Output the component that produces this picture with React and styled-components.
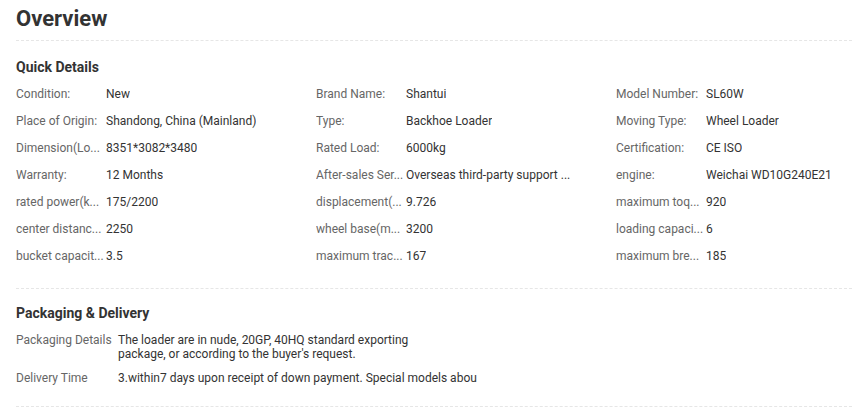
import React from "react";
import styled, { createGlobalStyle } from "styled-components";

const Global = createGlobalStyle`
  html, body { margin: 0; padding: 0; background: #fff; }
  body { font-family: Roboto, "Liberation Sans", Arial, sans-serif; color: #333; }
`;

const Page = styled.div`
  padding-left: 16px;
  width: 836px;
`;

const TitleBar = styled.div`
  height: 40px;
  border-bottom: 1px dashed #e6e6e6;
`;

const Title = styled.h1`
  margin: 0;
  font-size: 22px;
  line-height: 38px;
  font-weight: 700;
  color: #333;
`;

const Section = styled.section`
  padding-top: ${(p) => p.$top}px;
  padding-bottom: ${(p) => p.$bottom}px;
  border-bottom: 1px dashed #e6e6e6;
`;

const Heading = styled.h2`
  margin: 0;
  font-size: 14px;
  line-height: 20px;
  font-weight: 700;
  color: #333;
`;

const Grid = styled.div`
  margin-top: 4px;
  display: grid;
  grid-template-columns: 300px 300px 1fr;
`;

const Item = styled.div`
  display: flex;
  height: 27px;
  line-height: 27px;
  font-size: 12px;
  white-space: nowrap;
`;

const Label = styled.span`
  flex: 0 0 90px;
  width: 90px;
  overflow: hidden;
  color: #666;
`;

const Value = styled.span`
  max-width: 180px;
  overflow: hidden;
  color: #333;
`;

const DetailList = styled.div`
  margin-top: 10px;
  display: flex;
  flex-direction: column;
  gap: 10px;
`;

const DetailRow = styled.div`
  display: flex;
  font-size: 12px;
  line-height: 14px;
`;

const DetailLabel = styled.span`
  flex: 0 0 102px;
  color: #666;
`;

const DetailValue = styled.span`
  color: #333;
  width: 380px;
`;

const quick = [
  ["Condition:", "New"],
  ["Brand Name:", "Shantui"],
  ["Model Number:", "SL60W"],
  ["Place of Origin:", "Shandong, China (Mainland)"],
  ["Type:", "Backhoe Loader"],
  ["Moving Type:", "Wheel Loader"],
  ["Dimension(Lo...", "8351*3082*3480"],
  ["Rated Load:", "6000kg"],
  ["Certification:", "CE ISO"],
  ["Warranty:", "12 Months"],
  ["After-sales Ser...", "Overseas third-party support ..."],
  ["engine:", "Weichai WD10G240E21"],
  ["rated power(k...", "175/2200"],
  ["displacement(...", "9.726"],
  ["maximum toq...", "920"],
  ["center distanc...", "2250"],
  ["wheel base(m...", "3200"],
  ["loading capaci...", "6"],
  ["bucket capacit...", "3.5"],
  ["maximum trac...", "167"],
  ["maximum bre...", "185"],
];

export default function App() {
  return (
    <Page>
      <Global />
      <TitleBar>
        <Title>Overview</Title>
      </TitleBar>
      <Section $top={16} $bottom={18}>
        <Heading>Quick Details</Heading>
        <Grid>
          {quick.map(([l, v]) => (
            <Item key={l}>
              <Label>{l}</Label>
              <Value>{v}</Value>
            </Item>
          ))}
        </Grid>
      </Section>
      <Section $top={14} $bottom={21}>
        <Heading>Packaging &amp; Delivery</Heading>
        <DetailList>
          <DetailRow>
            <DetailLabel>Packaging Details</DetailLabel>
            <DetailValue>
              The loader are in nude, 20GP, 40HQ standard exporting
              <br />
              package, or according to the buyer's request.
            </DetailValue>
          </DetailRow>
          <DetailRow>
            <DetailLabel>Delivery Time</DetailLabel>
            <DetailValue>3.within7 days upon receipt of down payment. Special models abou</DetailValue>
          </DetailRow>
        </DetailList>
      </Section>
    </Page>
  );
}
